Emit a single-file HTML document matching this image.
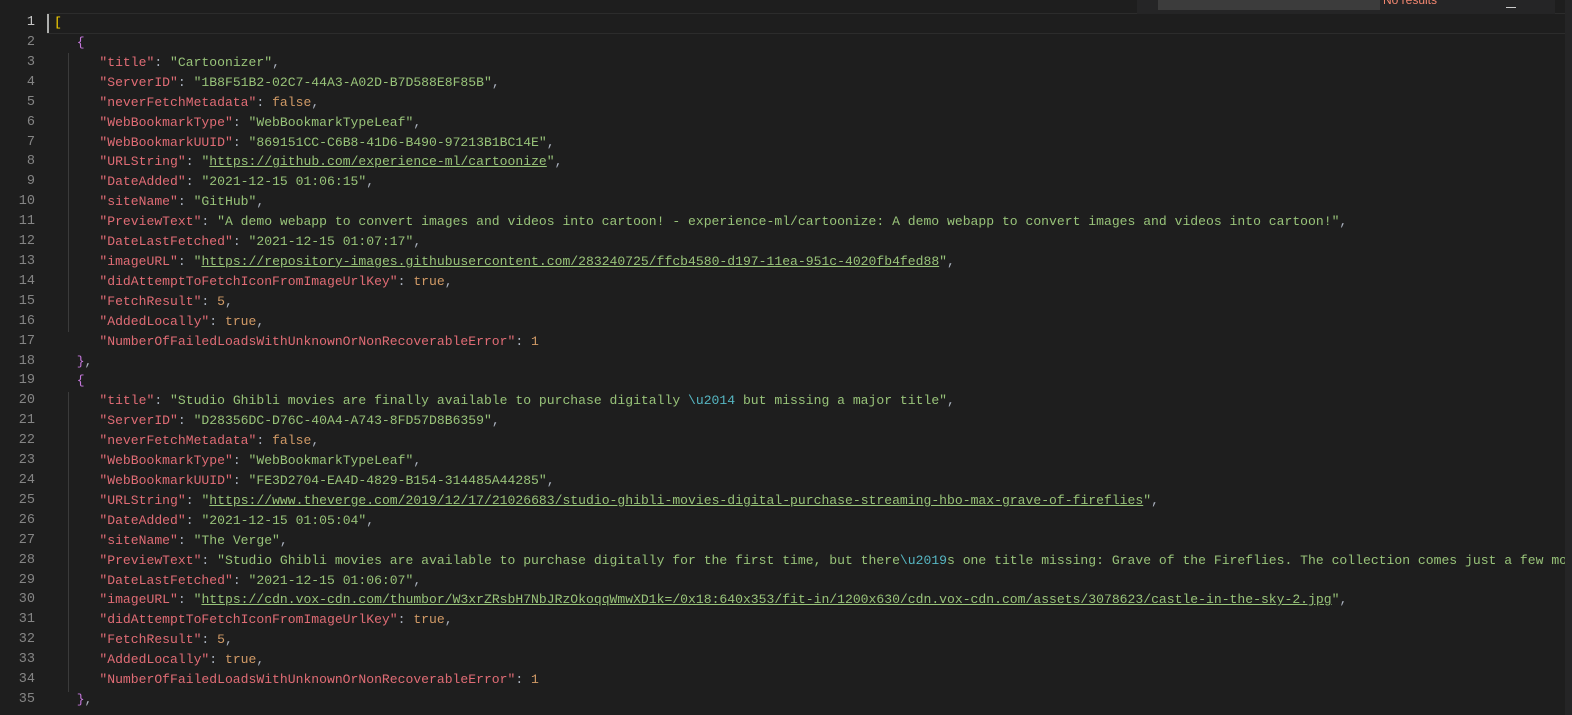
<!DOCTYPE html>
<html><head><meta charset="utf-8"><style>
html,body{margin:0;padding:0;background:#1e1e1e;width:1572px;height:715px;overflow:hidden}
body{position:relative;font-family:"Liberation Mono",monospace;font-size:13.08px}
.ln{position:absolute;left:0;width:35px;text-align:right;color:#858585;height:20px;line-height:20px;font-size:13.5px}
.ln.cur{color:#c6c6c6}
#c{position:absolute;left:0;top:0;width:1565px;height:715px;overflow:hidden}
.l{position:absolute;height:20px;line-height:20px;white-space:pre;color:#abb2bf}
.k{color:#e06c75}.s{color:#98c379}.n{color:#d19a66}.b{color:#c678dd}.y{color:#ffd700}.e{color:#56b6c2}
.u{text-decoration:underline}
.g{position:absolute;width:1px;background:#3b3b3b}
</style></head><body>
<div style="position:absolute;left:47px;top:13px;width:1525px;height:19px;border-top:1px solid #2c2c2c;border-bottom:1px solid #2c2c2c"></div>
<div style="position:absolute;left:47px;top:14px;width:2px;height:19px;background:#aeafad"></div>
<div style="position:absolute;left:1137px;top:0;width:418px;height:14px;background:#252526"></div>
<div style="position:absolute;left:1158px;top:0;width:222px;height:10px;background:#3c3c3c"></div>
<div style="position:absolute;left:1383px;top:-7px;color:#f48771;font-family:'Liberation Sans',sans-serif;font-size:12px">No results</div>
<div style="position:absolute;left:1506px;top:7px;width:10px;height:1px;background:#ccc"></div>
<div style="position:absolute;left:1565px;top:0;width:7px;height:715px;background:#252526"></div>
<div class="g" style="left:68px;top:53px;height:279px"></div>
<div class="g" style="left:68px;top:392px;height:300px"></div>
<div id="c"></div>
<script>
const L=[
[0,'<span class="y">[</span>'],
[1,'<span class="b">{</span>'],
[2,'<span class="k">"title"</span>: <span class="s">"Cartoonizer"</span>,'],
[2,'<span class="k">"ServerID"</span>: <span class="s">"1B8F51B2-02C7-44A3-A02D-B7D588E8F85B"</span>,'],
[2,'<span class="k">"neverFetchMetadata"</span>: <span class="n">false</span>,'],
[2,'<span class="k">"WebBookmarkType"</span>: <span class="s">"WebBookmarkTypeLeaf"</span>,'],
[2,'<span class="k">"WebBookmarkUUID"</span>: <span class="s">"869151CC-C6B8-41D6-B490-97213B1BC14E"</span>,'],
[2,'<span class="k">"URLString"</span>: <span class="s">"<span class="u">https://github.com/experience-ml/cartoonize</span>"</span>,'],
[2,'<span class="k">"DateAdded"</span>: <span class="s">"2021-12-15 01:06:15"</span>,'],
[2,'<span class="k">"siteName"</span>: <span class="s">"GitHub"</span>,'],
[2,'<span class="k">"PreviewText"</span>: <span class="s">"A demo webapp to convert images and videos into cartoon! - experience-ml/cartoonize: A demo webapp to convert images and videos into cartoon!"</span>,'],
[2,'<span class="k">"DateLastFetched"</span>: <span class="s">"2021-12-15 01:07:17"</span>,'],
[2,'<span class="k">"imageURL"</span>: <span class="s">"<span class="u">https://repository-images.githubusercontent.com/283240725/ffcb4580-d197-11ea-951c-4020fb4fed88</span>"</span>,'],
[2,'<span class="k">"didAttemptToFetchIconFromImageUrlKey"</span>: <span class="n">true</span>,'],
[2,'<span class="k">"FetchResult"</span>: <span class="n">5</span>,'],
[2,'<span class="k">"AddedLocally"</span>: <span class="n">true</span>,'],
[2,'<span class="k">"NumberOfFailedLoadsWithUnknownOrNonRecoverableError"</span>: <span class="n">1</span>'],
[1,'<span class="b">}</span>,'],
[1,'<span class="b">{</span>'],
[2,'<span class="k">"title"</span>: <span class="s">"Studio Ghibli movies are finally available to purchase digitally <span class="e">\\u2014</span> but missing a major title"</span>,'],
[2,'<span class="k">"ServerID"</span>: <span class="s">"D28356DC-D76C-40A4-A743-8FD57D8B6359"</span>,'],
[2,'<span class="k">"neverFetchMetadata"</span>: <span class="n">false</span>,'],
[2,'<span class="k">"WebBookmarkType"</span>: <span class="s">"WebBookmarkTypeLeaf"</span>,'],
[2,'<span class="k">"WebBookmarkUUID"</span>: <span class="s">"FE3D2704-EA4D-4829-B154-314485A44285"</span>,'],
[2,'<span class="k">"URLString"</span>: <span class="s">"<span class="u">https://www.theverge.com/2019/12/17/21026683/studio-ghibli-movies-digital-purchase-streaming-hbo-max-grave-of-fireflies</span>"</span>,'],
[2,'<span class="k">"DateAdded"</span>: <span class="s">"2021-12-15 01:05:04"</span>,'],
[2,'<span class="k">"siteName"</span>: <span class="s">"The Verge"</span>,'],
[2,'<span class="k">"PreviewText"</span>: <span class="s">"Studio Ghibli movies are available to purchase digitally for the first time, but there<span class="e">\\u2019</span>s one title missing: Grave of the Fireflies. The collection comes just a few months"</span>,'],
[2,'<span class="k">"DateLastFetched"</span>: <span class="s">"2021-12-15 01:06:07"</span>,'],
[2,'<span class="k">"imageURL"</span>: <span class="s">"<span class="u">https://cdn.vox-cdn.com/thumbor/W3xrZRsbH7NbJRzOkoqqWmwXD1k=/0x18:640x353/fit-in/1200x630/cdn.vox-cdn.com/assets/3078623/castle-in-the-sky-2.jpg</span>"</span>,'],
[2,'<span class="k">"didAttemptToFetchIconFromImageUrlKey"</span>: <span class="n">true</span>,'],
[2,'<span class="k">"FetchResult"</span>: <span class="n">5</span>,'],
[2,'<span class="k">"AddedLocally"</span>: <span class="n">true</span>,'],
[2,'<span class="k">"NumberOfFailedLoadsWithUnknownOrNonRecoverableError"</span>: <span class="n">1</span>'],
[1,'<span class="b">}</span>,'],
];
let h='',g='';
L.forEach((r,i)=>{const t=(13+i*19.91).toFixed(1);
g+=`<div class="ln${i==0?' cur':''}" style="top:${t}px">${i+1}</div>`;
h+=`<div class="l" style="top:${t}px;left:${54+r[0]*22.7}px">${r[1]}</div>`;});
document.getElementById('c').innerHTML=h;
document.body.insertAdjacentHTML('beforeend',g);
</script>
</body></html>
